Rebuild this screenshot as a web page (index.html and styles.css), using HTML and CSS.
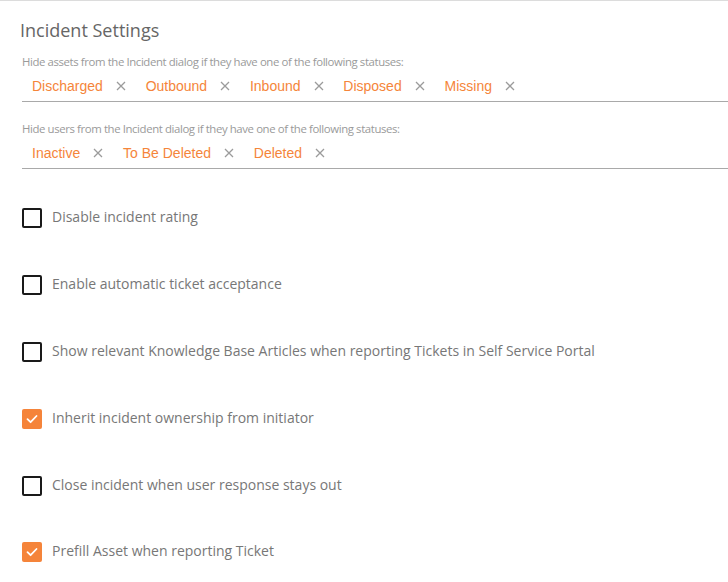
FILE: index.html
```html
<!DOCTYPE html>
<html>
<head>
<meta charset="utf-8">
<link rel="stylesheet" href="styles.css">
</head>
<body>
<div class="page">
  <h1 class="title">Incident Settings</h1>

  <div class="field">
    <div class="field-label">Hide assets from the Incident dialog if they have one of the following statuses:</div>
    <div class="chips">
      <span class="chip"><span class="chip-text">Discharged</span><svg class="chip-x" viewBox="0 0 10 10"><path d="M1 1L9 9M9 1L1 9"/></svg></span>
      <span class="chip"><span class="chip-text">Outbound</span><svg class="chip-x" viewBox="0 0 10 10"><path d="M1 1L9 9M9 1L1 9"/></svg></span>
      <span class="chip"><span class="chip-text">Inbound</span><svg class="chip-x" viewBox="0 0 10 10"><path d="M1 1L9 9M9 1L1 9"/></svg></span>
      <span class="chip"><span class="chip-text">Disposed</span><svg class="chip-x" viewBox="0 0 10 10"><path d="M1 1L9 9M9 1L1 9"/></svg></span>
      <span class="chip"><span class="chip-text">Missing</span><svg class="chip-x" viewBox="0 0 10 10"><path d="M1 1L9 9M9 1L1 9"/></svg></span>
    </div>
  </div>

  <div class="field">
    <div class="field-label">Hide users from the Incident dialog if they have one of the following statuses:</div>
    <div class="chips">
      <span class="chip"><span class="chip-text">Inactive</span><svg class="chip-x" viewBox="0 0 10 10"><path d="M1 1L9 9M9 1L1 9"/></svg></span>
      <span class="chip"><span class="chip-text">To Be Deleted</span><svg class="chip-x" viewBox="0 0 10 10"><path d="M1 1L9 9M9 1L1 9"/></svg></span>
      <span class="chip"><span class="chip-text">Deleted</span><svg class="chip-x" viewBox="0 0 10 10"><path d="M1 1L9 9M9 1L1 9"/></svg></span>
    </div>
  </div>

  <ul class="options">
    <li class="option"><span class="box"></span><span class="option-label">Disable incident rating</span></li>
    <li class="option"><span class="box"></span><span class="option-label">Enable automatic ticket acceptance</span></li>
    <li class="option"><span class="box"></span><span class="option-label">Show relevant Knowledge Base Articles when reporting Tickets in Self Service Portal</span></li>
    <li class="option"><span class="box checked"><svg viewBox="0 0 20 20"><path d="M5.5 10.2L8.6 13.2L14.5 7"/></svg></span><span class="option-label">Inherit incident ownership from initiator</span></li>
    <li class="option"><span class="box"></span><span class="option-label">Close incident when user response stays out</span></li>
    <li class="option"><span class="box checked"><svg viewBox="0 0 20 20"><path d="M5.5 10.2L8.6 13.2L14.5 7"/></svg></span><span class="option-label">Prefill Asset when reporting Ticket</span></li>
  </ul>
</div>
</body>
</html>
```

FILE: styles.css
```css
html, body {
  margin: 0;
  padding: 0;
  background: #fff;
}

body {
  font-family: "Open Sans", "Liberation Sans", sans-serif;
}

.page {
  border-top: 1px solid #dcdcdc;
  padding: 17px 0 0 22px;
}

.title {
  margin: 0 0 0 -2px;
  font-size: 18px;
  line-height: 24px;
  font-weight: 400;
  color: #666;
}

.field {
  margin-top: 20px;
  border-bottom: 1px solid #a9a9a9;
}

.title + .field {
  margin-top: 13px;
}

.field-label {
  font-size: 11.4px;
  line-height: 14px;
  letter-spacing: -0.4px;
  color: #9a9a9a;
  margin-bottom: 5px;
}

.chips {
  display: flex;
  height: 27px;
  align-items: flex-start;
}

.chip {
  display: flex;
  align-items: center;
  height: 24px;
  padding: 0 9.8px 0 10px;
  font-family: "Liberation Sans", Arial, sans-serif;
  font-size: 14px;
  color: #f5853a;
}

.chip-x {
  width: 10px;
  height: 10px;
  margin-left: 13px;
  fill: none;
  stroke: #9b9b9b;
  stroke-width: 1.3;
}

.options {
  list-style: none;
  margin: 16px 0 0 0;
  padding: 0;
}

.option {
  display: flex;
  align-items: center;
  height: 66.8px;
}

.box {
  box-sizing: border-box;
  width: 20px;
  height: 20px;
  border: 2px solid #1a1a1a;
  border-radius: 2px;
  flex: none;
}

.box.checked {
  border: none;
  background: #f5843a;
}

.box svg {
  display: block;
  width: 20px;
  height: 20px;
  fill: none;
  stroke: #fff;
  stroke-width: 1.8;
  stroke-linecap: round;
  stroke-linejoin: round;
}

.option-label {
  margin: 0 0 3px 10px;
  font-size: 14px;
  color: #777;
}
```
